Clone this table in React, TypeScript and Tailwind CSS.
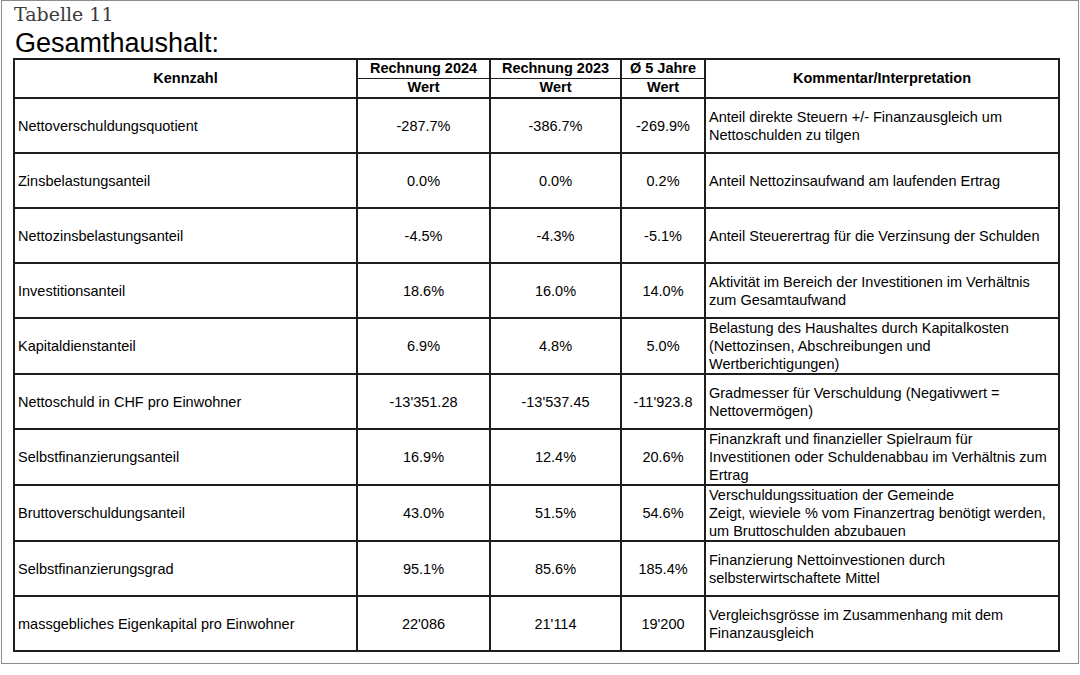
import React from "react";

const rows: [string, string, string, string, string[]][] = [
  ["Nettoverschuldungsquotient", "-287.7%", "-386.7%", "-269.9%", ["Anteil direkte Steuern +/- Finanzausgleich um", "Nettoschulden zu tilgen"]],
  ["Zinsbelastungsanteil", "0.0%", "0.0%", "0.2%", ["Anteil Nettozinsaufwand am laufenden Ertrag"]],
  ["Nettozinsbelastungsanteil", "-4.5%", "-4.3%", "-5.1%", ["Anteil Steuerertrag für die Verzinsung der Schulden"]],
  ["Investitionsanteil", "18.6%", "16.0%", "14.0%", ["Aktivität im Bereich der Investitionen im Verhältnis", "zum Gesamtaufwand"]],
  ["Kapitaldienstanteil", "6.9%", "4.8%", "5.0%", ["Belastung des Haushaltes durch Kapitalkosten", "(Nettozinsen, Abschreibungen und", "Wertberichtigungen)"]],
  ["Nettoschuld in CHF pro Einwohner", "-13'351.28", "-13'537.45", "-11'923.8", ["Gradmesser für Verschuldung (Negativwert =", "Nettovermögen)"]],
  ["Selbstfinanzierungsanteil", "16.9%", "12.4%", "20.6%", ["Finanzkraft und finanzieller Spielraum für", "Investitionen oder Schuldenabbau im Verhältnis zum", "Ertrag"]],
  ["Bruttoverschuldungsanteil", "43.0%", "51.5%", "54.6%", ["Verschuldungssituation der Gemeinde", "Zeigt, wieviele % vom Finanzertrag benötigt werden,", "um Bruttoschulden abzubauen"]],
  ["Selbstfinanzierungsgrad", "95.1%", "85.6%", "185.4%", ["Finanzierung Nettoinvestionen durch", "selbsterwirtschaftete Mittel"]],
  ["massgebliches Eigenkapital pro Einwohner", "22'086", "21'114", "19'200", ["Vergleichsgrösse im Zusammenhang mit dem", "Finanzausgleich"]],
];

export default function App() {
  const bd = "border-2 border-[#1e1e1e]";
  return (
    <div className="w-[1080px] h-[675px] bg-white" style={{ fontFamily: '"Liberation Sans", Arial, sans-serif' }}>
      <div className="ml-[1px] w-[1078px] h-[664px] border border-[#8c8c8c] pl-[12px] pt-[2px]">
        <div className="text-[19px] leading-[22px] text-[#3a3a3a]" style={{ fontFamily: '"DejaVu Serif", serif' }}>Tabelle 11</div>
        <div className="text-[27px] leading-[31px] text-black ml-[1px] mt-[3px]">Gesamthaushalt:</div>
        <table className="border-collapse text-black -mt-[1px] -ml-[1px] table-fixed" style={{ width: 1045 }}>
          <colgroup>
            <col style={{ width: 343 }} />
            <col style={{ width: 133 }} />
            <col style={{ width: 131 }} />
            <col style={{ width: 84 }} />
            <col style={{ width: 354 }} />
          </colgroup>
          <thead>
            <tr className="h-[19px]">
              <th rowSpan={2} className={`${bd} text-[14.5px] font-bold leading-[17px] p-0`}>Kennzahl</th>
              <th className={`${bd} border-b border-b-[#1e1e1e] text-[14.5px] font-bold leading-[17px] p-0`}>Rechnung 2024</th>
              <th className={`${bd} border-b border-b-[#1e1e1e] text-[14.5px] font-bold leading-[17px] p-0`}>Rechnung 2023</th>
              <th className={`${bd} border-b border-b-[#1e1e1e] text-[14.5px] font-bold leading-[17px] p-0`}>Ø 5 Jahre</th>
              <th rowSpan={2} className={`${bd} text-[14.5px] font-bold leading-[17px] p-0`}>Kommentar/Interpretation</th>
            </tr>
            <tr className="h-[20px]">
              <th className={`${bd} border-t border-t-[#1e1e1e] text-[14.5px] font-bold leading-[17px] p-0`}>Wert</th>
              <th className={`${bd} border-t border-t-[#1e1e1e] text-[14.5px] font-bold leading-[17px] p-0`}>Wert</th>
              <th className={`${bd} border-t border-t-[#1e1e1e] text-[14.5px] font-bold leading-[17px] p-0`}>Wert</th>
            </tr>
          </thead>
          <tbody>
            {rows.map((r, i) => (
              <tr key={i} className="h-[55px]">
                <td className={`${bd} text-[14.5px] leading-[18px] pl-[3px] py-0 text-left`}>{r[0]}</td>
                <td className={`${bd} text-[14.5px] leading-[18px] p-0 text-center`}>{r[1]}</td>
                <td className={`${bd} text-[14.5px] leading-[18px] p-0 text-center`}>{r[2]}</td>
                <td className={`${bd} text-[14.5px] leading-[18px] p-0 text-center`}>{r[3]}</td>
                <td className={`${bd} text-[14.5px] leading-[18px] pl-[3px] py-0 text-left whitespace-nowrap`}>
                  {r[4].map((l, j) => (
                    <div key={j}>{l}</div>
                  ))}
                </td>
              </tr>
            ))}
          </tbody>
        </table>
      </div>
    </div>
  );
}
